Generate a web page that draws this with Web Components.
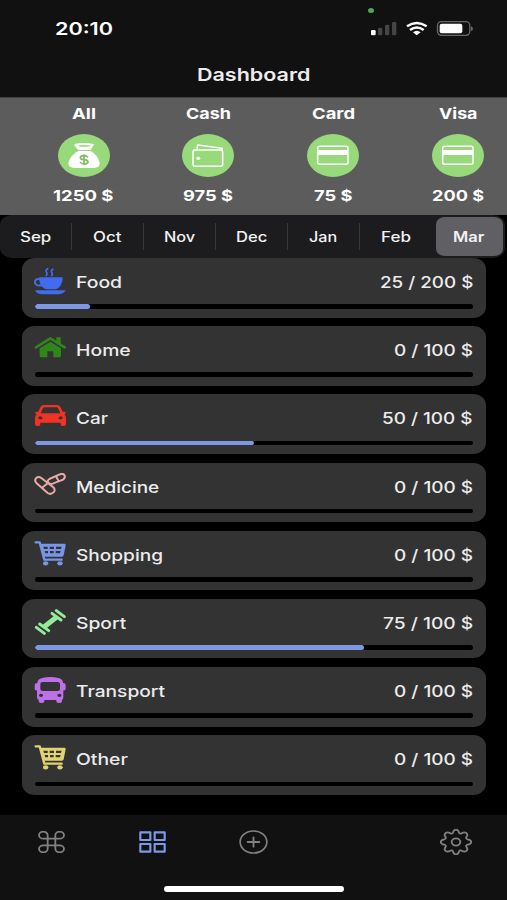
<!DOCTYPE html>
<html lang="en">
<head>
<meta charset="UTF-8">
<meta name="viewport" content="width=device-width, initial-scale=1.0">
<title>Dashboard</title>
<style>
  body {
    margin: 0;
    background: #000;
    font-family: Inter, "Liberation Sans", sans-serif;
    color: #ececec;
  }
</style>
</head>
<body>
<budget-app></budget-app>

<script>
// Every icon is [viewBox, markup]; they all use currentColor.
const cart = `
  <path d="M5 4H17L31 56H83" fill="none" stroke="currentColor" stroke-width="7" stroke-linecap="round" stroke-linejoin="round"/>
  <path fill-rule="evenodd" fill="currentColor" d="M18 8H92Q96 8 95 13L89 43Q88 47 84 47H27ZM28 17L30 24H41V17ZM47 17V24H60V17ZM66 17V24H81L83 17ZM32 30L34 37H42V30ZM48 30V37H59V30ZM65 30V37H78L80 30Z"/>
  <ellipse cx="35" cy="67" rx="8" ry="6.5" fill="currentColor"/>
  <ellipse cx="78" cy="67" rx="8" ry="6.5" fill="currentColor"/>`;

const card = `
  <rect x="32" y="37" width="91" height="54" rx="6" fill="none" stroke="currentColor" stroke-width="4.500"/>
  <path d="M32 48H123V63H32Z" fill="currentColor"/>`;

const icons = {
  food: ["0 0 96 84", `
    <path d="M41 2C28 9 45 14 37 22M57 4C44 11 61 15 53 23" fill="none" stroke="currentColor" stroke-width="5" stroke-linecap="round"/>
    <path d="M18 34C2 29 0 45 7 50C12 54 20 52 26 52" fill="none" stroke="currentColor" stroke-width="6"/>
    <path d="M15 28H86C86 47 77 64 62 64H40C24 64 15 47 15 28Z" fill="currentColor"/>
    <path d="M3 67H95C91 75 82 79 72 79H26C15 79 6 75 3 67Z" fill="currentColor"/>`],
  home: ["0 0 96 84", `
    <path d="M6 34L49 7L92 34" fill="none" stroke="currentColor" stroke-width="8" stroke-linecap="round" stroke-linejoin="round"/>
    <path d="M67 4H80V26L67 17Z" fill="currentColor"/>
    <path d="M17 37L49 17L81 37V60Q81 64 76 64H58V46H40V64H22Q17 64 17 60Z" fill="currentColor"/>`],
  car: ["0 0 96 84", `
    <path fill-rule="evenodd" fill="currentColor" d="M30 3H68Q76 3 80 10L86 23H91Q97 24 94 29L91 31Q96 36 96 42V61Q96 66 90 66H86Q80 66 80 61V56H19V61Q19 66 13 66H9Q3 66 3 61V42Q3 36 8 31L5 29Q2 24 8 23H13L19 10Q23 3 30 3ZM32 10Q28 10 26 14L20 28H79L73 14Q71 10 67 10ZM18 37A5 4.5 0 1 0 18 46Q26 46 26 44Q24 37 18 37ZM81 37Q75 37 73 44Q73 46 81 46A5 4.5 0 1 0 81 37Z"/>`],
  medicine: ["0 0 96 84", `
    <g fill="none" stroke="currentColor" stroke-width="6">
      <path d="M46 18L77 4C91 -1 98 11 87 20L56 32C46 35 35 25 46 18ZM66 9L74 25"/>
      <path d="M22 15L58 43C69 53 54 68 41 60L8 31C-3 19 10 7 22 15ZM42 30L24 44" fill="#333334"/>
    </g>`],
  cart: ["0 0 96 84", cart],
  sport: ["0 0 96 84", `
    <g stroke="currentColor" stroke-linecap="round">
      <path d="M31 53L67 25" stroke-width="15" stroke-linecap="butt"/>
      <path d="M17 45L44 65M54 13L81 33" stroke-width="9"/>
      <path d="M7 55L31 73M67 5L91 23" stroke-width="9"/>
    </g>`],
  bus: ["0 0 96 84", `
    <path fill-rule="evenodd" fill="currentColor" d="M25 3Q49 -3 73 3Q87 6 87 18Q95 18 95 24V35Q95 41 88 40V60Q88 67 84 69V73Q84 78 77 78H74Q67 78 67 73V69H31V73Q31 78 24 78H21Q14 78 14 73V69Q9 67 9 60V40Q2 41 2 35V24Q2 18 10 18Q10 6 25 3ZM26 15Q19 15 19 21V36Q19 42 26 42H71Q78 42 78 36V21Q78 15 71 15ZM21 50A6 5 0 1 0 21.1 50ZM76 50A6 5 0 1 0 76.1 50Z"/>`],
  bag: ["0 0 156 129", `
    <path d="M53 29Q78 24 106 30Q110 33 105 37L97 48H61L49 35Q47 31 53 29Z" fill="currentColor"/>
    <path d="M57 35Q78 31 100 35Q79 42 57 35" fill="#98d97c"/>
    <path d="M61 51H98Q121 64 125 87Q127 102 103 102H55Q30 102 31 87Q36 64 61 51Z" fill="currentColor"/>
    <path d="M90 70Q86 65 78 65Q67 65 67 71Q67 76 78 77Q90 78 90 84Q90 90 78 90Q69 90 66 84M78 61V94" fill="none" stroke="#7dbb64" stroke-width="5"/>`],
  wallet: ["0 0 156 129", `
    <g fill="none" stroke="currentColor" stroke-width="4.500" stroke-linejoin="round">
      <rect x="33" y="48" width="89" height="49" rx="5"/>
      <path d="M34 51L45 46L47 33L120 43V50"/>
    </g>
    <ellipse cx="49" cy="73" rx="6" ry="5" fill="currentColor"/>`],
  card: ["0 0 156 129", card],
  command: ["0 0 81 66", `
    <path d="M29 12.500A13 10.500 0 1 0 16 23H65A13 10.500 0 1 0 52 12.500V53.500A13 10.500 0 1 0 65 43H16A13 10.500 0 1 0 29 53.500Z" fill="none" stroke="currentColor" stroke-width="5.500"/>`],
  grid: ["0 0 81 66", `
    <path d="M4 4H34V27H4ZM47 4H77V27H47ZM4 39H34V62H4ZM47 39H77V62H47Z" fill="none" stroke="currentColor" stroke-width="6.500" stroke-linejoin="round"/>`],
  plus: ["0 0 87 72", `
    <ellipse cx="43.500" cy="36" rx="40" ry="33" fill="none" stroke="currentColor" stroke-width="5"/>
    <path d="M26 36H61M43.500 22V50" stroke="currentColor" stroke-width="5.500" stroke-linecap="round"/>`],
  gear: ["0 0 96 78", `
    <path d="M39 11C41 -1 55 -1 57 11C59 14 62 15 65 13C75 6 87 14 80 23C77 27 78 29 83 31C97 33 97 45 83 47C78 49 77 51 80 55C87 64 75 72 65 65C62 63 59 64 57 67C55 79 41 79 39 67C37 64 34 63 31 65C21 72 9 64 16 55C19 51 18 49 13 47C-1 45 -1 33 13 31C18 29 19 27 16 23C9 14 21 6 31 13C34 15 37 14 39 11Z" fill="none" stroke="currentColor" stroke-width="5.500"/>
    <ellipse cx="48" cy="39" rx="13" ry="11" fill="none" stroke="currentColor" stroke-width="5.500"/>`],
  status: ["348 60 312 51", `
    <rect x="351" y="90" width="14" height="16" rx="4" fill="#fff"/>
    <g fill="#454545">
      <rect x="372" y="83" width="13" height="23" rx="4"/>
      <rect x="393" y="74" width="13" height="32" rx="4"/>
      <rect x="414" y="66" width="13" height="40" rx="4"/>
    </g>
    <g fill="none" stroke="#fff" stroke-width="7.500">
      <path d="M459 79Q488 59 518 79"/>
      <path d="M468 90Q488 75 509 90"/>
    </g>
    <path d="M477 97Q488 88 500 97L488 106Z" fill="#fff"/>
    <rect x="550.500" y="65" width="97" height="41" rx="12" fill="none" stroke="#68686a" stroke-width="4"/>
    <rect x="557" y="71" width="68" height="29" rx="6" fill="#fff"/>
    <path d="M651 79Q657 81 657 86Q657 91 651 93Z" fill="#68686a"/>`],
};

class AppIcon extends HTMLElement {
  constructor() {
    super();
    this.attachShadow({ mode: "open" });
  }

  connectedCallback() {
    const [viewBox, markup] = icons[this.getAttribute("name")];
    this.shadowRoot.innerHTML = `
      <style>
        :host { display: block; flex: none; }
        svg { display: block; width: 100%; height: 100%; }
      </style>
      <svg viewBox="${viewBox}" preserveAspectRatio="none">${markup}</svg>
    `;
  }
}

// Wide lettering: the slotted text is stretched to the "width" attribute.
class WideText extends HTMLElement {
  constructor() {
    super();
    this.attachShadow({ mode: "open" });
    this.shadowRoot.innerHTML = `
      <style>
        :host { display: block; flex: none; white-space: nowrap; }
        span { display: inline-block; transform-origin: 0 50%; }
      </style>
      <span><slot></slot></span>
    `;
  }

  connectedCallback() {
    const width = Number(this.getAttribute("width"));
    const span = this.shadowRoot.querySelector("span");
    this.style.width = width + "px";
    span.style.transform = `scaleX(${width / span.offsetWidth})`;
  }
}

class StatusBar extends HTMLElement {
  constructor() {
    super();
    this.attachShadow({ mode: "open" });
    this.shadowRoot.innerHTML = `
      <style>
        :host {
          display: flex;
          justify-content: space-between;
          box-sizing: border-box;
          height: 52px;
          padding: 20px 33px 0 54.500px;
          position: relative;
          color: #fff;
        }
        wide-text { font-size: 17.5px; font-weight: 600; line-height: 18px; }
        app-icon { width: 104px; height: 17px; }
        .dot {
          position: absolute;
          left: 367.500px;
          top: 8px;
          width: 6px;
          height: 5px;
          border-radius: 50%;
          background: #4fa75a;
        }
      </style>
      <wide-text width="58">20:10</wide-text>
      <app-icon name="status"></app-icon>
      <i class="dot"></i>
    `;
  }
}

class AccountItem extends HTMLElement {
  constructor() {
    super();
    this.attachShadow({ mode: "open" });
  }

  connectedCallback() {
    const [name, nameWidth, icon, sum, sumWidth] = this.data;
    this.shadowRoot.innerHTML = `
      <style>
        :host {
          display: flex;
          flex: none;
          flex-direction: column;
          align-items: center;
          width: 124.700px;
          font-size: 15px;
          font-weight: 700;
          line-height: 18px;
          color: #fff;
        }
        .circle {
          width: 52px;
          height: 43px;
          margin: 11px 0 10px;
          border-radius: 50%;
          background: #98d97c;
        }
        app-icon { width: 52px; height: 43px; }
      </style>
      <wide-text width="${nameWidth}">${name}</wide-text>
      <div class="circle"><app-icon name="${icon}"></app-icon></div>
      <wide-text width="${sumWidth}">${sum}</wide-text>
    `;
  }
}

class MonthPicker extends HTMLElement {
  constructor() {
    super();
    this.attachShadow({ mode: "open" });
    const months = [["Sep", 31], ["Oct", 28.5], ["Nov", 31], ["Dec", 31.5], ["Jan", 28.5], ["Feb", 30], ["Mar", 31.5]];
    this.shadowRoot.innerHTML = `
      <style>
        :host {
          display: flex;
          box-sizing: border-box;
          width: 505px;
          height: 43px;
          padding-right: 1px;
          border-radius: 12px / 10px;
          background: #1c1c1e;
          font-size: 14.200px;
          font-weight: 500;
          line-height: 18px;
          color: #f2f2f2;
        }
        .month {
          flex: none;
          width: 72px;
          display: flex;
          align-items: center;
          justify-content: center;
          height: 27px;
          margin: 8px 0;
          box-sizing: border-box;
          border-right: 1px solid #38383a;
        }
        .month:nth-last-child(2) { border-color: transparent; }
        .month.active {
          flex: 1;
          height: 39px;
          margin: 2px 1.500px 0 3.500px;
          border: 0;
          border-radius: 9px / 7px;
          background: #5f5f64;
          font-weight: 600;
        }
      </style>
      ${months.map(([name, width]) => `
        <div class="month ${name === "Mar" ? "active" : ""}"><wide-text width="${width}">${name}</wide-text></div>
      `).join("")}
    `;
  }
}

class BudgetCard extends HTMLElement {
  constructor() {
    super();
    this.attachShadow({ mode: "open" });
  }

  connectedCallback() {
    const { name, nameWidth, icon, color, spent, limit, sumWidth } = this.data;
    this.shadowRoot.innerHTML = `
      <style>
        :host {
          display: block;
          box-sizing: border-box;
          height: 59.500px;
          padding: 10px 13px 0 12px;
          border-radius: 13px / 11px;
          background: #333334;
        }
        .row {
          display: flex;
          height: 28px;
          line-height: 28px;
          font-size: 16px;
          font-weight: 500;
        }
        app-icon { width: 32px; height: 28px; margin-right: 10px; color: ${color}; }
        .sum { margin-left: auto; }
        .track {
          height: 4.500px;
          margin: 8.300px 0 0 1px;
          border-radius: 3px;
          background: #000;
          overflow: hidden;
        }
        .fill { width: ${spent / limit * 100}%; height: 100%; border-radius: 3px; background: #7e98e6; }
      </style>
      <div class="row">
        <app-icon name="${icon}"></app-icon>
        <wide-text width="${nameWidth}">${name}</wide-text>
        <wide-text class="sum" width="${sumWidth}">${spent} / ${limit} $</wide-text>
      </div>
      <div class="track"><div class="fill"></div></div>
    `;
  }
}

class TabBar extends HTMLElement {
  constructor() {
    super();
    this.attachShadow({ mode: "open" });
    this.shadowRoot.innerHTML = `
      <style>
        :host { display: block; height: 85px; background: #111; color: #818181; }
        nav { display: grid; grid-template-columns: repeat(5, 1fr); height: 54px; padding-left: 1px; place-items: center; }
        app-icon { width: 27px; height: 22px; }
        .active { color: #7e98e6; }
        .plus { width: 29px; height: 24px; }
        .gear { width: 32px; height: 26px; }
        .indicator { width: 180px; height: 5.500px; margin: 17px auto 0; border-radius: 3px; background: #fff; }
      </style>
      <nav>
        <app-icon name="command"></app-icon>
        <app-icon class="active" name="grid"></app-icon>
        <app-icon class="plus" name="plus"></app-icon>
        <span></span>
        <app-icon class="gear" name="gear"></app-icon>
      </nav>
      <div class="indicator"></div>
    `;
  }
}

class BudgetApp extends HTMLElement {
  constructor() {
    super();
    this.attachShadow({ mode: "open" });
    this.shadowRoot.innerHTML = `
      <style>
        :host { display: flex; flex-direction: column; width: 507px; height: 900px; overflow: hidden; }
        header { height: 97px; background: #111; }
        h1 { display: flex; justify-content: center; margin: 13px 0 0; font-size: 17.500px; font-weight: 600; line-height: 20px; }
        .accounts {
          display: flex;
          box-sizing: border-box;
          height: 118px;
          padding: 7px 0 0 21.300px;
          border-top: 1px solid #414142;
          background: #5c5c5c;
          overflow: hidden;
        }
        .cards { flex: 1; display: flex; flex-direction: column; gap: 8.700px; padding: 0 21px 0 22px; }
      </style>
      <header>
        <status-bar></status-bar>
        <h1><wide-text width="113">Dashboard</wide-text></h1>
      </header>
      <div class="accounts"></div>
      <month-picker></month-picker>
      <div class="cards"></div>
      <tab-bar></tab-bar>
    `;
  }

  connectedCallback() {
    const accounts = [
      ["All", 23.5, "bag", "1250 $", 60.5],
      ["Cash", 45.5, "wallet", "975 $", 50],
      ["Card", 43, "card", "75 $", 39],
      ["Visa", 38, "card", "200 $", 52],
    ];
    const budgets = [
      { name: "Food", nameWidth: 46, icon: "food", color: "#426cf0", spent: 25, limit: 200, sumWidth: 93 },
      { name: "Home", nameWidth: 54.5, icon: "home", color: "#30851d", spent: 0, limit: 100, sumWidth: 79.5 },
      { name: "Car", nameWidth: 32, icon: "car", color: "#f03324", spent: 50, limit: 100, sumWidth: 91 },
      { name: "Medicine", nameWidth: 83, icon: "medicine", color: "#e9aaa8", spent: 0, limit: 100, sumWidth: 79.5 },
      { name: "Shopping", nameWidth: 87, icon: "cart", color: "#7896e8", spent: 0, limit: 100, sumWidth: 79.5 },
      { name: "Sport", nameWidth: 50.5, icon: "sport", color: "#93ec98", spent: 75, limit: 100, sumWidth: 90 },
      { name: "Transport", nameWidth: 88.5, icon: "bus", color: "#bd70e8", spent: 0, limit: 100, sumWidth: 79.5 },
      { name: "Other", nameWidth: 52, icon: "cart", color: "#e3d272", spent: 0, limit: 100, sumWidth: 79.5 },
    ];
    this.fill(".accounts", "account-item", accounts);
    this.fill(".cards", "budget-card", budgets);
  }

  fill(selector, tag, list) {
    const box = this.shadowRoot.querySelector(selector);
    list.forEach((data) => {
      const item = document.createElement(tag);
      item.data = data;
      box.appendChild(item);
    });
  }
}

customElements.define("app-icon", AppIcon);
customElements.define("wide-text", WideText);
customElements.define("status-bar", StatusBar);
customElements.define("account-item", AccountItem);
customElements.define("month-picker", MonthPicker);
customElements.define("budget-card", BudgetCard);
customElements.define("tab-bar", TabBar);
customElements.define("budget-app", BudgetApp);
</script>
</body>
</html>
